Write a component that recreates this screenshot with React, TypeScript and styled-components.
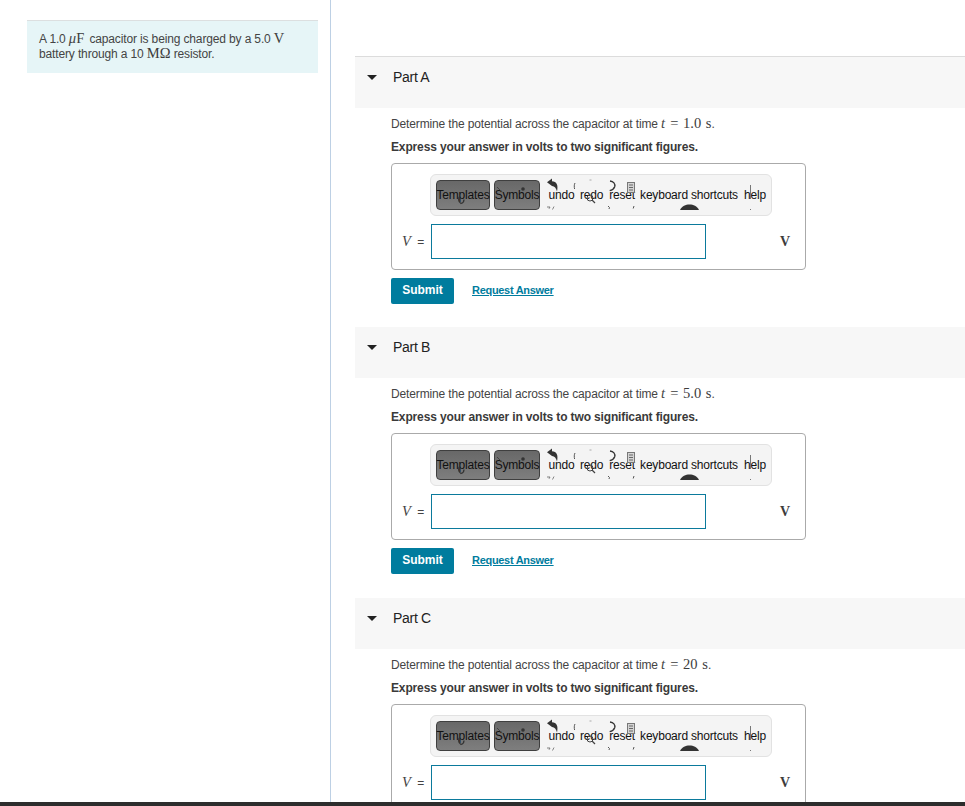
import * as React from "react";
import styled, { createGlobalStyle } from "styled-components";

const GlobalStyle = createGlobalStyle`
  html, body {
    margin: 0;
    padding: 0;
    height: 100%;
    overflow: hidden;
    background: #fff;
    font-family: "Liberation Sans", Arial, sans-serif;
    color: #333;
  }
`;

const Page = styled.div`
  display: flex;
  align-items: flex-start;
  height: 806px;
  overflow: hidden;
`;

const Sidebar = styled.aside`
  box-sizing: border-box;
  flex: 0 0 331px;
  height: 806px;
  padding: 20px 12px 0 27px;
  border-right: 1px solid #bdd0e4;
`;

const IntroBox = styled.div`
  box-sizing: border-box;
  height: 53px;
  padding: 11px 12px 0;
  background: #e6f5f7;
  border-top: 1px solid #dcdfe0;
  font-size: 12px;
  letter-spacing: -0.14px;
  line-height: 15px;
  color: #444;
`;

const Main = styled.main`
  flex: 1;
  padding: 56px 0 0 24px;
`;

const Math = styled.span`
  font-family: "Liberation Serif", "Times New Roman", serif;
  font-size: 14.5px;
  line-height: 12px;
  letter-spacing: 0;
  word-spacing: 1px;
  color: #3c3c3c;
`;

const MathWide = styled(Math)`
  letter-spacing: 2px;
`;

const MathVar = styled.i`
  font-family: "Liberation Serif", "Times New Roman", serif;
  font-size: 14.5px;
  line-height: 12px;
  letter-spacing: 0;
  font-style: italic;
`;

const TimeVar = styled(MathVar)`
  margin-right: 2px;
`;

const PartSection = styled.section`
  height: 271px;
`;

const PartHeader = styled.header<{ $first?: boolean }>`
  box-sizing: border-box;
  display: flex;
  align-items: flex-start;
  height: ${(p) => (p.$first ? "52px" : "51px")};
  padding-top: 12px;
  background: #f7f7f7;
  border-top: ${(p) => (p.$first ? "1px solid #dcdcdc" : "none")};
`;

const Caret = styled.span`
  width: 0;
  height: 0;
  margin: 6px 0 0 12px;
  border-left: 5px solid transparent;
  border-right: 5px solid transparent;
  border-top: 5px solid #222;
`;

const PartTitle = styled.h3`
  margin: 0 0 0 16px;
  font-size: 14px;
  letter-spacing: -0.3px;
  line-height: 16px;
  font-weight: 400;
  color: #222;
`;

const PartBody = styled.div`
  padding: 9px 0 0 36px;
`;

const Prompt = styled.p`
  margin: 0;
  height: 23px;
  font-size: 12px;
  letter-spacing: -0.14px;
  line-height: 15px;
  color: #444;
`;

const Instruction = styled.p`
  margin: 0;
  height: 23px;
  font-size: 12px;
  letter-spacing: -0.14px;
  line-height: 15px;
  font-weight: 700;
  color: #3a3a3a;
`;

const AnswerBox = styled.div`
  box-sizing: border-box;
  width: 415px;
  height: 107px;
  padding: 10px 0 0 38px;
  border: 1px solid #aaa;
  border-radius: 4px;
`;

const Palette = styled.div`
  position: relative;
  box-sizing: border-box;
  display: flex;
  align-items: center;
  width: 342px;
  height: 42px;
  padding: 0 0 0 5px;
  background: #f4f4f4;
  border: 1px solid #e2e2e2;
  border-radius: 6px;
  font-size: 12px;
  letter-spacing: -0.2px;
  color: #111;
`;

const PaletteMenu = styled.span<{ $width: number; $gap: number }>`
  box-sizing: border-box;
  display: flex;
  align-items: center;
  justify-content: center;
  flex: 0 0 ${(p) => p.$width}px;
  min-width: 0;
  height: 30px;
  margin-right: ${(p) => p.$gap}px;
  padding-bottom: 1px;
  background: linear-gradient(#686868, #7e7e7e);
  border: 1px solid #3f3f3f;
  border-radius: 4px;
  white-space: nowrap;
`;

const PaletteAction = styled.span<{ $width: number }>`
  flex: 0 0 ${(p) => p.$width}px;
  min-width: 0;
  text-align: center;
  white-space: nowrap;
`;

const StrayGlyphs = styled.svg`
  position: absolute;
  left: -1px;
  top: -1px;
  pointer-events: none;
`;

const InputRow = styled.div`
  display: flex;
  align-items: center;
  margin: 8px 0 0 1px;
`;

const VarLabel = styled.span`
  flex: 0 0 29px;
  margin-left: -29px;
  font-size: 12px;
  word-spacing: 3px;
  color: #444;
  white-space: nowrap;
`;

const AnswerInput = styled.input`
  box-sizing: border-box;
  width: 275px;
  height: 35px;
  padding: 0;
  background: #fff;
  border: 1px solid #0b7a9c;
  border-radius: 0;
  outline: none;
`;

const UnitLabel = styled.span`
  margin-left: 74px;
  font-family: "Liberation Serif", "Times New Roman", serif;
  font-size: 14px;
  font-weight: 700;
  color: #3c3c3c;
`;

const Actions = styled.div`
  display: flex;
  align-items: center;
  margin-top: 8px;
`;

const SubmitButton = styled.button`
  width: 63px;
  height: 26px;
  padding: 0 0 3px;
  background: #007c9e;
  border: none;
  border-radius: 2px;
  font-family: inherit;
  font-size: 12px;
  font-weight: 700;
  color: #fff;
`;

const RequestLink = styled.a`
  margin: 0 0 2px 18px;
  font-size: 11px;
  letter-spacing: -0.3px;
  font-weight: 700;
  color: #007c9e;
  text-decoration: underline;
`;

const BottomBar = styled.div`
  position: fixed;
  left: 0;
  right: 0;
  bottom: 0;
  height: 4px;
  background: #2d2d2d;
`;

const PaletteStrays = () => (
  <StrayGlyphs width="342" height="42" viewBox="0 0 342 42" fill="none">
    {/* stray marks over the two menus */}
    <path d="M30 22c-2 2-2 6 1 7.500 2-.5 3-2 3-4" stroke="#333" strokeWidth="1.200" />
    <path d="M67 13l5 5" stroke="#444" strokeWidth="1" />
    <circle cx="93" cy="15" r="1.800" fill="#333" />
    {/* undo arrow */}
    <path d="M122 10l-5-3.700 5-3.800v2.700c4.500.2 6.500 3.500 5 10.300-.9-3.600-2.300-5.400-5-5.500z" fill="#333" transform="translate(0 2)" />
    <path d="M117 33h3l-1 1.800M124 32.500l-1.500 3" stroke="#666" strokeWidth="0.8" />
    <path d="M145 9c-.9 1.500-.9 4-.4 6" stroke="#555" strokeWidth="1" />
    <path d="M159.500 6h2" stroke="#999" strokeWidth="0.8" />
    {/* zoom glyph under redo */}
    <circle cx="160" cy="24" r="3" stroke="#444" strokeWidth="1" />
    <path d="M162 26l3 3" stroke="#444" strokeWidth="1.200" />
    {/* redo arc */}
    <path d="M180 7c3.500.3 5.500 3 4.700 5.700-.6 1.800-2.500 3.300-5 4" stroke="#333" strokeWidth="1.300" />
    <path d="M178 32l1.500 1.500-.5 1.500M204 32l-.8 2.500" stroke="#555" strokeWidth="1" />
    {/* keyboard */}
    <rect x="197.500" y="8.500" width="7" height="10" fill="#d4d4d4" stroke="#777" />
    <path d="M199 11h4M199 13.500h4M199 16h4" stroke="#666" />
    {/* dark arch */}
    <path d="M250 36c2-4 5.500-5.500 9.500-5.500s7.500 1.500 9.500 5.500z" fill="#333" />
    {/* help */}
    <path d="M320.500 11v14" stroke="#777" strokeWidth="1" />
    <path d="M320 35.500h1" stroke="#777" />
  </StrayGlyphs>
);

type PartProps = {
  name: string;
  time: string;
  first?: boolean;
};

const Part = ({ name, time, first }: PartProps) => (
  <PartSection>
    <PartHeader $first={first}>
      <Caret />
      <PartTitle>{name}</PartTitle>
    </PartHeader>
    <PartBody>
      <Prompt>
        Determine the potential across the capacitor at time <TimeVar>t</TimeVar> <Math>= {time} s</Math>.
      </Prompt>
      <Instruction>Express your answer in volts to two significant figures.</Instruction>
      <AnswerBox>
        <Palette>
          <PaletteMenu $width={54} $gap={4}>Templates</PaletteMenu>
          <PaletteMenu $width={46} $gap={7}>Symbols</PaletteMenu>
          <PaletteAction $width={29}>undo</PaletteAction>
          <PaletteAction $width={31}>redo</PaletteAction>
          <PaletteAction $width={30}>reset</PaletteAction>
          <PaletteAction $width={104}>keyboard shortcuts</PaletteAction>
          <PaletteAction $width={28}>help</PaletteAction>
          <PaletteStrays />
        </Palette>
        <InputRow>
          <VarLabel>
            <MathVar>V</MathVar> =
          </VarLabel>
          <AnswerInput aria-label="V" />
          <UnitLabel>V</UnitLabel>
        </InputRow>
      </AnswerBox>
      <Actions>
        <SubmitButton>Submit</SubmitButton>
        <RequestLink href="#">Request Answer</RequestLink>
      </Actions>
    </PartBody>
  </PartSection>
);

export default function App() {
  return (
    <>
      <GlobalStyle />
      <Page>
        <Sidebar>
          <IntroBox>
            A 1.0 <MathVar>μ</MathVar>
            <MathWide>F</MathWide> capacitor is being charged by a 5.0 <Math>V</Math>
            <br />
            battery through a 10 <Math>MΩ</Math> resistor.
          </IntroBox>
        </Sidebar>
        <Main>
          <Part first name="Part A" time="1.0" />
          <Part name="Part B" time="5.0" />
          <Part name="Part C" time="20" />
        </Main>
      </Page>
      <BottomBar />
    </>
  );
}
